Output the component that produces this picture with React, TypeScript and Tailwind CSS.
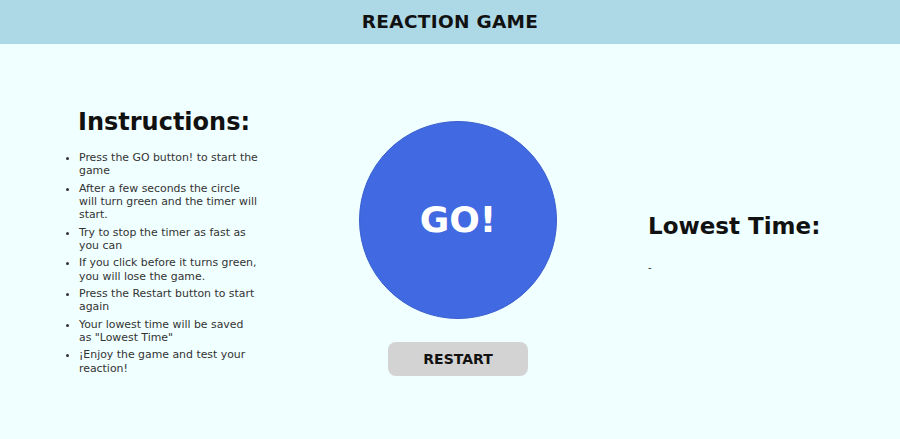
import React from "react";

export default function App() {
  const items = [
    "Press the GO button! to start the game",
    "After a few seconds the circle will turn green and the timer will start.",
    "Try to stop the timer as fast as you can",
    "If you click before it turns green, you will lose the game.",
    "Press the Restart button to start again",
    'Your lowest time will be saved as "Lowest Time"',
    "¡Enjoy the game and test your reaction!",
  ];
  return (
    <div className="w-[900px] h-[439px] bg-[#f0ffff] flex flex-col" style={{ fontFamily: '"DejaVu Sans", Verdana, sans-serif' }}>
      <header className="h-[44px] bg-[#add8e6] flex items-center justify-center">
        <h1 className="text-[18.5px] font-bold text-[#111] tracking-[0.3px]">REACTION GAME</h1>
      </header>
      <main className="flex-1 flex items-start">
        <section className="ml-[58px] mt-[63px] w-[212px]">
          <h2 className="text-[24px] font-bold text-[#111] text-center leading-[30px]">Instructions:</h2>
          <ul className="list-disc pl-[21px] pr-[11px] mt-[14px] text-[10.9px] leading-[13.2px] text-[#333]">
            {items.map((t) => (
              <li key={t} className="mb-[4.3px]">{t}</li>
            ))}
          </ul>
        </section>
        <section className="ml-[89px] mt-[77px] flex flex-col items-center">
          <div className="w-[198px] h-[198px] rounded-full bg-[#4169e1] border border-[#3a5fd0] flex items-center justify-center">
            <span className="text-white font-bold text-[36px]">GO!</span>
          </div>
          <button className="mt-[23px] w-[140px] h-[34px] rounded-[8px] bg-[#d3d3d3] text-[14px] font-bold text-[#111]">RESTART</button>
        </section>
        <section className="ml-[91px] mt-[168px]">
          <h2 className="text-[23px] font-bold text-[#111] leading-[28px]">Lowest Time:</h2>
          <p className="mt-[20px] text-[10px] text-[#333]">-</p>
        </section>
      </main>
    </div>
  );
}
